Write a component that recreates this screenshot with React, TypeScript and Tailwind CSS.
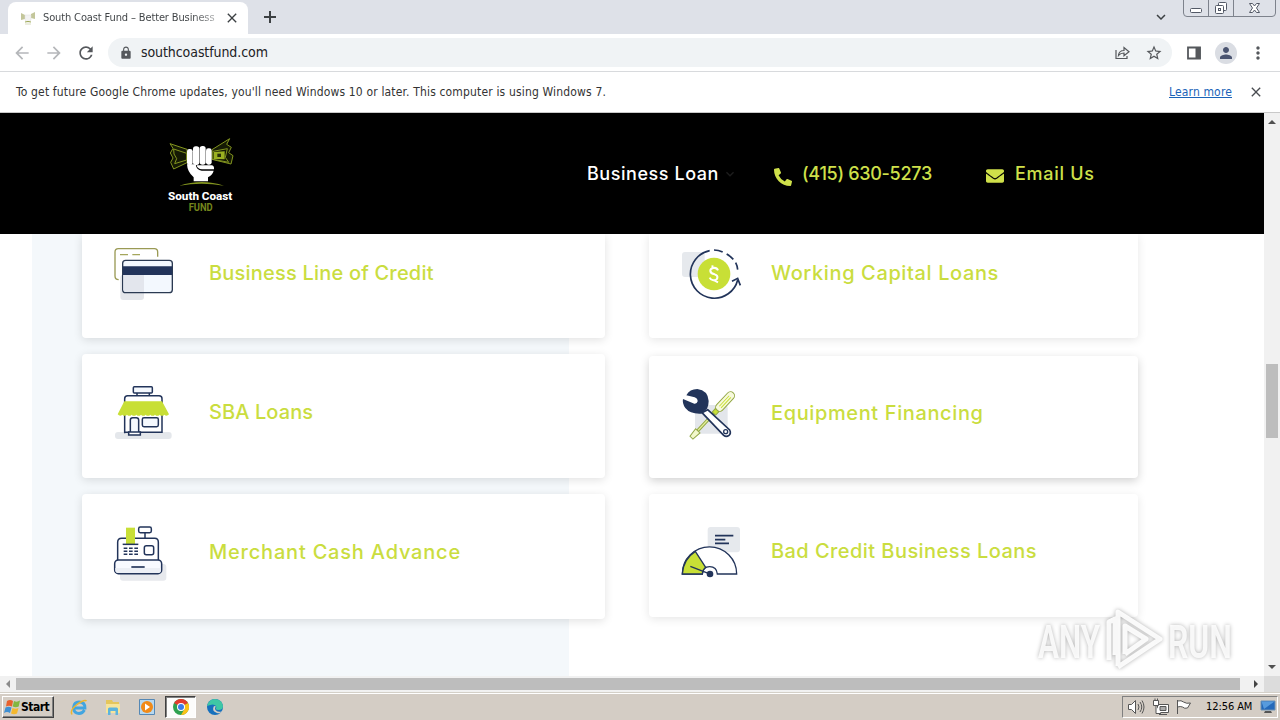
import type { ReactNode } from "react";
import { FaEnvelope, FaPhoneAlt } from "react-icons/fa";
import {
  MdArrowBack,
  MdArrowForward,
  MdClose,
  MdKeyboardArrowDown,
  MdLock,
  MdMoreVert,
  MdPerson,
  MdRefresh,
  MdStarBorder,
} from "react-icons/md";

const NAVY = "#22345a";
const LIME = "#c8df36";

function TabStrip() {
  return (
    <div className="flex h-[34px] bg-[#dee1e8]">
      <div className="mt-0.5 ml-2 flex h-8 w-60 items-center rounded-t-lg bg-white pl-3">
        <svg width="16" height="16" viewBox="0 0 16 16" className="shrink-0">
          <path d="M1 3l4 2v4l-4 1zM15 2l-4 2v4l4 1z" fill="#c3c69a" />
          <path d="M5 5h6v5l-2 2H7L5 10z" fill="#f3f3f3" stroke="#ddd" strokeWidth=".5" />
          <path d="M5 12q3-1 6 0" stroke="#9ba650" fill="none" />
          <path d="M5 14h6" stroke="#d9dcc0" />
        </svg>
        <span className="ml-[7px] w-[176px] bg-gradient-to-r from-[#3c4043] from-85% to-[#3c4043]/30 bg-clip-text text-[11px] tracking-[-0.13px] whitespace-nowrap text-transparent">
          South Coast Fund – Better Business
        </span>
        <MdClose className="ml-[5px] size-4 text-[#3c4043]" />
      </div>
      <svg width="14" height="14" viewBox="0 0 14 14" className="mt-2.5 ml-[15px]">
        <path d="M7 1v12M1 7h12" stroke="#3c4043" strokeWidth="2" />
      </svg>
      <MdKeyboardArrowDown className="mt-2 ml-auto size-[18px] text-[#3c4043]" />
      <svg width="94" height="18" viewBox="0 0 94 18" className="mr-[3px] ml-[13px]" fill="none" stroke="#7d828c">
        <path d="M.5 0v13q0 3.500 3.500 3.500h85q3.500 0 3.500-3.500V0M25.500 0v16M50.500 0v16" />
        <rect x="7.500" y="8.500" width="11" height="4" rx="1" fill="#fff" stroke="#535966" />
        <rect x="35.500" y="2.500" width="8" height="8" rx="1" fill="#fff" stroke="#535966" />
        <rect x="32.500" y="5.500" width="8" height="8" rx="1" fill="#fff" stroke="#535966" />
        <rect x="35.500" y="8.500" width="2" height="2" stroke="#535966" />
        <path d="M66.500 3.500h3l2 2.500 2-2.500h3l-3 4.500 3 4.500h-3l-2-2.500-2 2.500h-3l3-4.500z" fill="#fff" stroke="#535966" />
      </svg>
    </div>
  );
}

function Toolbar() {
  return (
    <div className="flex h-[38px] items-center border-b border-[#d8dadd] bg-white text-[#55585c]">
      <MdArrowBack className="ml-3 size-5 text-[#b5b7ba]" />
      <MdArrowForward className="ml-3 size-5 text-[#b5b7ba]" />
      <MdRefresh className="ml-3 size-5" />
      <div className="ml-3 flex h-[29px] w-[1064px] items-center rounded-full bg-[#f0f3f5] pl-[11px]">
        <MdLock className="size-3.5" />
        <span className="ml-2 text-[14px] tracking-[-0.08px] text-[#202124]">southcoastfund.com</span>
        <svg width="16" height="16" viewBox="0 0 16 16" className="ml-auto" fill="none" stroke="currentColor" strokeWidth="1.200">
          <path d="M2 5v8.500h11V11" />
          <path d="M4.500 10.500Q5 5.500 10 5.500V2.500l5 4.200-5 4V8Q6.500 8 4.500 10.500z" />
        </svg>
        <MdStarBorder className="mr-[9px] ml-[15px] size-[18px]" />
      </div>
      <svg width="16" height="16" viewBox="0 0 16 16" className="ml-[14px]">
        <path d="M2 2.500h12v11H2z" fill="none" stroke="currentColor" strokeWidth="1.800" />
        <path d="M9.500 2h5v12h-5z" fill="currentColor" />
      </svg>
      <span className="ml-[13px] flex size-[22px] items-center justify-center rounded-full bg-[#dadde3]">
        <MdPerson className="size-[18px] text-[#4a5470]" />
      </span>
      <MdMoreVert className="ml-[11px] size-5" />
    </div>
  );
}

function InfoBar() {
  return (
    <div className="flex h-[41px] items-center border-b border-[#c9c9c9] bg-white pb-px pl-4 text-[12px] text-[#333]">
      <span className="tracking-[0.16px] whitespace-nowrap">
        To get future Google Chrome updates, you'll need Windows 10 or later. This computer is using Windows 7.
      </span>
      <span className="mr-4 ml-auto tracking-[0.15px] text-[#1a63b8] underline">Learn more</span>
      <MdClose className="mr-4 size-4 text-[#4a4d51]" />
    </div>
  );
}

function Logo() {
  return (
    <svg width="80" height="85" viewBox="60 30 240 255">
      <g fill="#151a04" stroke="#83951f" strokeWidth="3">
        <path d="M90 68l9 14-8 14 8 15-7 13 9 20 40-19V85z" />
        <path d="M101 84l39 13v20l-36 11 6-15-8-14z" />
        <path d="M269 53l-9 17 14 9-8 16 13 9-6 25-57-14V86z" />
        <path d="M262 83l-43 8v24l47 9-10-15z" />
      </g>
      <path d="M222 93l32-2v24l-32-1z" fill="#9bb120" />
      <path d="M232 98h11v10h-11z" fill="#29310a" />
      <g fill="#fff">
        <rect x="141" y="84" width="17" height="48" rx="7" />
        <rect x="159" y="76" width="19" height="56" rx="8" />
        <rect x="179" y="75" width="18" height="56" rx="8" />
        <rect x="198" y="82" width="17" height="49" rx="7" />
        <path d="M141 130h26q2 17 18 19h36q-3 12-17 20v12h-43v-12q-19-16-20-39z" />
        <path d="M170 133h46q7 2 6 12h-36q-14-1-16-12z" />
      </g>
      <path d="M118 194q68-22 134 0-68-12-134 0z" fill="#83951f" />
      <text x="84" y="236" textLength="193" lengthAdjust="spacingAndGlyphs" fill="#fff" fontFamily="Roboto" fontWeight="800" fontSize="33">
        South Coast
      </text>
      <text x="146" y="269" textLength="72" lengthAdjust="spacingAndGlyphs" fill="#74851c" fontFamily="Roboto" fontWeight="700" fontSize="32">
        FUND
      </text>
    </svg>
  );
}

function Header() {
  return (
    <header className="flex h-[121px] shrink-0 items-center bg-black pl-40 font-[Inter,sans-serif] text-[18px] font-medium text-[#cfe04a]">
      <Logo />
      <span className="mb-px ml-[347px] w-[132px] tracking-[0.55px] whitespace-nowrap text-white">Business Loan</span>
      <MdKeyboardArrowDown className="ml-[3px] size-4 text-[#1d1d1d]" />
      <FaPhoneAlt className="mt-1.5 ml-[36px] size-[18px]" />
      <span className="mb-px ml-[10px] w-[130px] tracking-[-0.3px] whitespace-nowrap">(415) 630-5273</span>
      <FaEnvelope className="mt-1 ml-[54px] size-[18px]" />
      <span className="mb-px ml-[11px] tracking-[0.72px] whitespace-nowrap">Email Us</span>
    </header>
  );
}

function CreditCardIcon() {
  return (
    <svg width="70" height="64" viewBox="120 30 210 192" fill="none" strokeWidth="4">
      <rect x="151" y="134" width="71" height="76" rx="9" fill="#e4e6ea" />
      <path d="M146 149q-11 0-11-11V66q0-10 10-10h108q10 0 10 10v14" stroke="#9a9a55" />
      <path d="M150 74h24M187 74h23" stroke="#a5a65c" />
      <rect x="158" y="91" width="149" height="97" rx="9" fill="#f3f8fe" stroke="#2b3a52" />
      <path d="M160 135h62v51h-54q-8 0-8-8z" fill="#e3e6ed" />
      <path d="M159 109h147v26H159z" fill={NAVY} />
    </svg>
  );
}

function CapitalIcon() {
  return (
    <svg width="70" height="64" viewBox="120 30 210 192" fill="none" stroke={NAVY} strokeWidth="5">
      <rect x="126" y="66" width="68" height="75" rx="9" fill="#e6e9ed" stroke="none" />
      <path d="M209 62A72 72 0 1 0 293 150" />
      <path d="M222 60q13 0 26 6M260 72q12 7 20 16M287 98q5 9 6 21" />
      <path d="M276 154l17-9 8 21" />
      <circle cx="222" cy="132" r="49" fill={LIME} stroke="none" />
      <path d="M234 121q-4-9-14-7-10 2-9 9 1 8 13 10 10 3 8 11-2 8-12 7-8-1-11-8M218 113l-1-7M223 151l11 6" stroke="#fff" strokeWidth="6" />
    </svg>
  );
}

function ShopIcon() {
  return (
    <svg width="70" height="64" viewBox="90 30 210 192" fill="none" stroke={NAVY} strokeWidth="4.500">
      <rect x="105" y="186" width="170" height="21" rx="9" fill="#e4e7eb" stroke="none" />
      <path d="M134 190V86q0-9 9-9h94q9 0 9 9v101H134" fill="#fff" />
      <rect x="160" y="50" width="57" height="19" rx="3" fill="#f5f9fe" />
      <path d="M171 69v7M208 69v7" />
      <path
        d="M133 94h113l21 39q-7 8-14 1-7 7-14 0-7 7-14 0-7 7-14 0-7 7-14 0-7 7-14 0-7 7-14 0-7 7-14 0-7 7-14 0-7 7-14 0-7 7-14-1z"
        fill={LIME}
        stroke="none"
      />
      <path d="M151 186v-36q0-7 7-7h11q7 0 7 7v36" fill="#f5f9fe" />
      <path d="M146 186h35v9h-35z" fill="#fff" />
      <rect x="187" y="143" width="48" height="27" rx="5" fill="#f5f9fe" />
    </svg>
  );
}

function ToolsIcon() {
  return (
    <svg width="70" height="64" viewBox="60 30 210 192" fill="none" strokeWidth="5">
      <rect x="105" y="105" width="98" height="86" rx="9" fill="#e3e6eb" />
      <g transform="translate(168 124) rotate(43)" stroke="#93a846" strokeWidth="3">
        <path d="M-4 10h7v70h-7z" fill="#e5f09b" />
        <path d="M-9 80h18l-3 28H-6z" fill="#f2f7cb" />
        <rect x="-12" y="-76" width="24" height="72" rx="12" fill="#f7f9dd" />
        <path d="M-3-61v43M4-61v43" stroke={LIME} />
        <path d="M-7-5H7v14H-7z" fill={LIME} />
      </g>
      <path d="M143 119l66 61q5 10-2 16-8 6-16 0l-65-68z" fill="#fff" stroke={NAVY} />
      <circle cx="197" cy="185" r="6" stroke={NAVY} strokeWidth="4" />
      <path d="M79 76q10-19 33-19 32 4 34 36 0 14-5 23l-17 15q-33 2-48-17-10-14-7-27l34 14q8 1 10-7 0-9-9-12z" fill={NAVY} />
    </svg>
  );
}

function RegisterIcon() {
  return (
    <svg width="70" height="64" viewBox="90 30 210 192" fill="none" stroke={NAVY} strokeWidth="4.500">
      <rect x="120" y="162" width="139" height="50" rx="9" fill="#e7e9ed" stroke="none" />
      <path d="M113 151V97q0-12 12-12h99q11 0 11 12v54" fill="#fff" />
      <rect x="176" y="51" width="38" height="17" rx="5" fill="#fff" />
      <path d="M195 68v17" />
      <path d="M138 53h27v50h-27z" fill={LIME} stroke="none" />
      <path d="M128 103h47" />
      <path d="M131 115h44M131 124h44M131 133h44" strokeDasharray="11 5" />
      <rect x="193" y="107" width="28" height="27" rx="6" />
      <rect x="104" y="150" width="141" height="41" rx="11" fill="#f8faff" />
      <path d="M106 174h137v7q0 8-9 8H115q-9 0-9-8z" fill="#eceff5" stroke="none" />
      <path d="M154 171h40" strokeWidth="5" />
    </svg>
  );
}

function GaugeIcon() {
  return (
    <svg width="70" height="64" viewBox="60 30 210 192" fill="none" stroke={NAVY} strokeWidth="4">
      <rect x="143" y="51" width="97" height="76" rx="9" fill="#e6e9ed" stroke="none" />
      <path d="M165 77h55M165 89h31M165 100h42" strokeWidth="5" />
      <path d="M67 192a81 81 0 0 1 163 0h-58q-2-22-23-22t-22 22z" fill="#fff" />
      <path d="M67 192q2-44 39-68l31 48q-9 7-10 20z" fill={LIME} />
      <path d="M91 169l56 22" />
      <circle cx="150" cy="192" r="10" fill={NAVY} stroke="none" />
    </svg>
  );
}

type CardProps = { title: string; icon: ReactNode; className: string; titleClass: string };

function LoanCard({ title, icon, className, titleClass }: CardProps) {
  return (
    <div className={`flex items-start bg-white ${className}`}>
      {icon}
      <h3 className={`flex h-16 items-center text-[20px] font-medium whitespace-nowrap text-[#cadd3f] ${titleClass}`}>{title}</h3>
    </div>
  );
}

function Watermark() {
  return (
    <svg width="210" height="76" viewBox="0 0 210 76" className="absolute top-[603px] left-[1034px] drop-shadow-[0_0_2px_rgba(0,0,0,0.35)]">
      <g fill="#fff" fillOpacity=".85" fontFamily="Roboto" fontSize="46" fontWeight="600">
        <text x="4" y="55" textLength="62" lengthAdjust="spacingAndGlyphs">ANY</text>
        <text x="134" y="55" textLength="64" lengthAdjust="spacingAndGlyphs">RUN</text>
      </g>
      <path
        d="M75 57V19l6-3v36M84 63V9l42 27-42 28M91 51V23l21 13-21 15"
        fill="none"
        stroke="#fff"
        strokeWidth="5"
        strokeLinejoin="round"
        strokeOpacity=".9"
      />
    </svg>
  );
}

function Page() {
  return (
    <div className="flex h-[579px] bg-white">
      <div className="flex w-[1264px] flex-col">
        <Header />
        <main className="flex h-[442px] bg-[linear-gradient(90deg,#fff_32px,#f4f8fb_32px,#f4f8fb_569px,#fff_569px)] pl-[82px] font-[Inter,sans-serif]">
          <div className="flex w-[523px] flex-col gap-4">
            <LoanCard
              title="Business Line of Credit"
              icon={<CreditCardIcon />}
              titleClass="mt-px tracking-[0.2px]"
              className="h-[104px] gap-[29px] rounded-b pt-1.5 pl-7 shadow-[0_2px_10px_rgba(0,0,0,0.12)]"
            />
            <LoanCard
              title="SBA Loans"
              icon={<ShopIcon />}
              titleClass="tracking-[0.1px]"
              className="h-[124px] gap-[29px] rounded pt-[26px] pl-7 shadow-[0_2px_10px_rgba(0,0,0,0.12)]"
            />
            <LoanCard
              title="Merchant Cash Advance"
              icon={<RegisterIcon />}
              titleClass="tracking-[0.8px]"
              className="h-[125px] gap-[29px] rounded pt-[26px] pl-7 shadow-[0_2px_10px_rgba(0,0,0,0.12)]"
            />
          </div>
          <div className="ml-11 flex w-[489px] flex-col">
            <LoanCard
              title="Working Capital Loans"
              icon={<CapitalIcon />}
              titleClass="mt-px tracking-[0.62px]"
              className="h-[104px] gap-[21px] rounded-b pt-1.5 pl-[31px] shadow-[0_2px_10px_rgba(0,0,0,0.1)]"
            />
            <LoanCard
              title="Equipment Financing"
              icon={<ToolsIcon />}
              titleClass="mt-px tracking-[0.62px]"
              className="mt-[18px] h-[122px] gap-[21px] rounded pt-6 pl-[31px] shadow-[0_3px_10px_rgba(0,0,0,0.18)]"
            />
            <LoanCard
              title="Bad Credit Business Loans"
              icon={<GaugeIcon />}
              titleClass="-mt-px tracking-[0.44px]"
              className="mt-4 h-[123px] gap-[21px] rounded pt-[26px] pl-[31px] shadow-[0_2px_10px_rgba(0,0,0,0.1)]"
            />
          </div>
        </main>
        <div className="flex h-4 items-center bg-[#f1f1f1]">
          <svg width="16" height="16" viewBox="0 0 16 16"><path d="M10 4v8L6 8z" fill="#8b8b8b" /></svg>
          <div className="h-3 w-[1224px] bg-[#bdbdbd]" />
          <svg width="16" height="16" viewBox="0 0 16 16" className="ml-2"><path d="M6 4v8l4-4z" fill="#444" /></svg>
        </div>
      </div>
      <div className="flex w-4 flex-col items-center bg-[#f1f1f1]">
        <svg width="16" height="18" viewBox="0 0 16 18"><path d="M4 11h8L8 7z" fill="#505050" /></svg>
        <div className="mt-[233px] h-[74px] w-3 bg-[#bdbdbd]" />
        <svg width="16" height="16" viewBox="0 0 16 16" className="mt-auto"><path d="M4 5h8l-4 4z" fill="#505050" /></svg>
        <div className="h-4 w-4 bg-[#dcdcdc]" />
      </div>
    </div>
  );
}

function Taskbar() {
  return (
    <div className="flex h-7 items-center border-t border-[#d4d0c8] bg-[#d4cdc5] pt-px text-[12px] text-black shadow-[inset_0_1px_0_#fff]">
      <div className="ml-0.5 flex h-[22px] w-[52px] items-center border border-t-white border-r-[#404040] border-b-[#404040] border-l-white pl-px shadow-[inset_-1px_-1px_0_#808080]">
        <svg width="17" height="16" viewBox="0 0 17 16" className="shrink-0">
          <path d="M3 2q3-2 6 0L8 7.500q-3-1.500-6 0z" fill="#e8602c" />
          <path d="M10 2q3 1.500 6-.5l-1.300 6q-3 1.500-6 0z" fill="#83b641" />
          <path d="M1.500 8.500q3-1.500 6 0L6 14q-3-1.800-6 0z" fill="#3f8fd2" />
          <path d="M8.500 9q3 1.500 6 0L13 14.500q-3 1.500-6 0z" fill="#f5b82e" />
        </svg>
        <span className="text-[12px] font-bold tracking-[-0.5px]">Start</span>
      </div>
      <svg width="18" height="18" viewBox="0 0 18 18" className="ml-4" fill="none">
        <path d="M14.500 12Q12.500 15.500 9 15.500 3.500 15 3.500 9.500 4 4 9 4q6 0 6 6H5" stroke="#42a5e0" strokeWidth="2.800" />
        <path d="M2 16.500Q-.5 12 7 6.500T16.500 3" stroke="#edb52c" strokeWidth="1.500" />
      </svg>
      <svg width="18" height="18" viewBox="0 0 18 18" className="ml-4">
        <path d="M2 2h6l1 2h6v11H2z" fill="#e5c65c" />
        <path d="M2 6h14v9H2z" fill="#f7e49a" />
        <path d="M4 17v-6q0-1.500 1.500-1.500h7Q14 9.500 14 11v6h-2.500v-4h-5v4z" fill="#5db4dd" />
      </svg>
      <svg width="18" height="18" viewBox="0 0 18 18" className="ml-4">
        <path d="M1.500 1.500h15v15h-15z" fill="#b7d8ef" stroke="#5588b5" />
        <circle cx="9" cy="9" r="6" fill="#f18a17" />
        <path d="M7 5.500l5 3.500-5 3.500z" fill="#fff" />
      </svg>
      <div className="ml-[9px] flex h-[22px] w-[31px] items-center justify-center border border-t-[#404040] border-r-white border-b-white border-l-[#404040] bg-[#fcfcfb] shadow-[inset_1px_1px_0_#808080]">
        <svg width="16" height="16" viewBox="0 0 16 16">
          <circle cx="8" cy="8" r="8" fill="#2fa150" />
          <path d="M8 8L1.100 4A8 8 0 0 1 15 4z" fill="#e33b2e" />
          <path d="M8 8l7-4a8 8 0 0 1-7 12l3.500-6z" fill="#fbc116" />
          <circle cx="8" cy="8" r="4" fill="#fff" />
          <circle cx="8" cy="8" r="3" fill="#3c7ce8" />
        </svg>
      </div>
      <svg width="18" height="18" viewBox="0 0 18 18" className="ml-2.5">
        <circle cx="9" cy="9" r="8" fill="#1670bd" />
        <path d="M1 8Q3 1 9 1q7 .5 8 7 0 4-4.500 4-4 0-2-3Q9 4.500 1 8z" fill="#3fc7a5" />
        <path d="M8 8q-3 5 3 7 3 1 5-1.500-4 1-6-1-2-2 0-4z" fill="#d4cdc5" />
      </svg>
      <div className="mr-0.5 ml-auto flex h-[22px] w-[156px] items-center border border-t-[#808080] border-r-white border-b-white border-l-[#808080] pl-[5px]">
        <svg width="66" height="18" viewBox="0 0 66 18" fill="#fff" stroke="#555">
          <path d="M.5 6.500h3l4-4v13l-4-4h-3z" />
          <path d="M10 6q2 3 0 6M12 4q3.500 5 0 10M14 2.500q4 6.500 0 13" fill="none" />
          <path d="M29.500 6.500h11v8h-11zM31 16.500h8" />
          <path d="M32 8.500h6v4h-6z" fill="#aaa" />
          <path d="M25.500 2.500h5v5h-5zM27 .5v2M29.500.5v2M28 7.500v8h5" />
          <path d="M49.500 2v14M49.500 3q4-1 6 1 3 2 7 1l-3 5q-3 1-5-1-2-1-5 0z" />
        </svg>
        <span className="ml-3 w-[46px] text-[11px] tracking-[-0.08px] whitespace-nowrap">12:56 AM</span>
        <svg width="16" height="14" viewBox="0 0 16 14" className="ml-2">
          <path d="M1 1h14v9H1z" fill="#2469ba" stroke="#6d91b2" />
          <path d="M1.500 1.500h13L4 9z" fill="#579bdd" />
          <path d="M5 11h6l1 2H4z" fill="#555" />
        </svg>
      </div>
    </div>
  );
}

export default function App() {
  return (
    <div className="relative h-[720px] w-[1280px] overflow-hidden bg-white font-['DejaVu_Sans_Condensed','DejaVu_Sans',sans-serif]">
      <TabStrip />
      <Toolbar />
      <InfoBar />
      <Page />
      <Taskbar />
      <Watermark />
    </div>
  );
}
